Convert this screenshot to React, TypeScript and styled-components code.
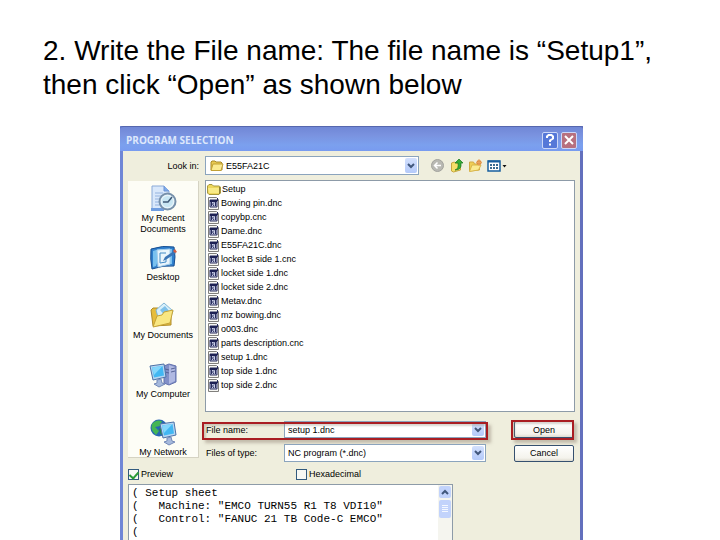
import React from "react";
import styled, { createGlobalStyle } from "styled-components";

const GlobalStyle = createGlobalStyle`
  * { box-sizing: border-box; }
  body { margin: 0; background: #fff; }
  button, input, select, textarea { font: inherit; color: inherit; margin: 0; padding: 0; border: 0; background: none; outline: none; }
  svg { display: block; flex: none; }
`;

const Slide = styled.main`
  display: flex;
  flex-direction: column;
  height: 100vh;
  overflow: hidden;
  font-family: "Liberation Sans", Arial, sans-serif;
`;

const Heading = styled.h1`
  margin: 34px 43px 24px;
  font-size: 28px;
  line-height: 34px;
  font-weight: 400;
  color: #000;
`;

const Dialog = styled.section`
  display: flex;
  flex-direction: column;
  flex: 1;
  min-height: 0;
  margin: 0 137px 0 120px;
  background: #efeedd;
  border: solid #6f86d6;
  border-width: 0 3px;
  border-right-color: #6370bd;
  font-size: 9px;
  line-height: 14px;
  color: #000;
`;

const TitleBar = styled.header`
  display: flex;
  align-items: center;
  gap: 3px;
  height: 25px;
  margin: 0 -3px;
  padding: 2px 6px 0 6px;
  border-top: 1px solid #5667ae;
  border-radius: 3px 3px 0 0;
  background: linear-gradient(#7087d6, #7a93e0 35%, #7ba0ee 75%, #789bf0);
`;

const Title = styled.h2`
  flex: 1;
  margin: 0;
  font-family: "Open Sans", "Noto Sans", sans-serif;
  font-size: 10px;
  font-weight: 700;
  color: #dde7fc;
`;

const CaptionButton = styled.button<{ $close?: boolean }>`
  display: grid;
  place-items: center;
  width: 16px;
  height: 17px;
  border: 1px solid #cbd7f8;
  border-radius: 2px;
  background: ${(p) => (p.$close ? "#b7707f" : "#5578d8")};
`;

const Body = styled.div`
  display: flex;
  flex-direction: column;
  flex: 1;
  min-height: 0;
  padding: 5px 5px 0;
`;

const LookInRow = styled.div`
  display: grid;
  grid-template-columns: 71px minmax(0, 214px) auto;
  column-gap: 6px;
  align-items: center;
  height: 19px;
  margin-bottom: 5px;
  > label { text-align: right; }
`;

const Combo = styled.div<{ $indent?: boolean }>`
  display: flex;
  align-items: center;
  gap: 2px;
  height: 100%;
  min-width: 0;
  padding: 1px 1px 1px ${(p) => (p.$indent ? "4px" : "3px")};
  border: 1px solid #8ba4bd;
  background: #fff;
  select, input { appearance: none; flex: 1; min-width: 0; height: 100%; }
`;

const Arrow = styled.button`
  display: grid;
  place-items: center;
  width: 12px;
  height: 100%;
  border-radius: 2px;
  background: linear-gradient(#d3e0fd, #b4cafa);
`;

const Tools = styled.div`
  display: flex;
  align-items: center;
  gap: 4px;
  margin-left: 5px;
`;

const ToolButton = styled.button`
  display: grid;
  place-items: center;
  min-width: 15px;
  height: 16px;
`;

const Columns = styled.div`
  display: grid;
  grid-template-columns: 71px minmax(0, 1fr);
  column-gap: 6px;
`;

const Places = styled.nav`
  display: grid;
  grid-template-rows: repeat(4, 1fr) 38px;
  height: 277px;
  margin-top: 1px;
  padding-top: 4px;
  border: solid #d5d3c3;
  border-width: 0 1px 1px 0;
  background: #fdfdf6;
`;

const Place = styled.button`
  display: flex;
  flex-direction: column;
  align-items: center;
  line-height: 11px;
  white-space: nowrap;
  svg { margin-bottom: 1px; }
`;

const Main = styled.div`
  display: flex;
  flex-direction: column;
`;

const FileList = styled.ul`
  min-height: 232px;
  margin: 0 0 9px;
  padding: 1px 0 0 1px;
  list-style: none;
  border: 1px solid #8d9ba8;
  background: #fff;
`;

const FileItem = styled.li`
  height: 14px;
  button { display: flex; align-items: center; gap: 1px; height: 14px; white-space: nowrap; }
`;

const FieldRow = styled.div`
  position: relative;
  display: grid;
  grid-template-columns: 78px minmax(0, 202px) minmax(60px, 1fr);
  align-items: center;
  height: 17px;
  margin-bottom: 6px;
  padding: 0 1px;
`;

const PushButton = styled.button`
  justify-self: end;
  width: 60px;
  height: 17px;
  border: 1px solid #35506f;
  border-radius: 2px;
  background: linear-gradient(#fff, #f4f3ec 80%, #dedbd0);
`;

const Marker = styled.span<{ $button?: boolean }>`
  position: absolute;
  top: ${(p) => (p.$button ? "-1px" : "1px")};
  bottom: -2px;
  left: ${(p) => (p.$button ? "auto" : "-3px")};
  right: ${(p) => (p.$button ? "1px" : "87px")};
  width: ${(p) => (p.$button ? "63px" : "auto")};
  border: 2px solid #a91d22;
  box-shadow: 3px 3px 3px #9a8f8088, inset 2px 2px 2px #88807055;
  pointer-events: none;
`;

const Options = styled.div`
  display: grid;
  grid-template-columns: 168px auto;
  justify-content: start;
  align-items: center;
  height: 12px;
  margin: 0 0 5px;
`;

const Check = styled.label`
  display: flex;
  align-items: center;
  gap: 2px;
`;

const Tick = styled.input`
  appearance: none;
  width: 11px;
  height: 11px;
  && { border: 1px solid #325a7e; background: #f7f8f4; }
  &:checked::after {
    content: "";
    display: block;
    width: 4px;
    height: 7px;
    margin: 0 2px;
    border: solid #2a9a35;
    border-width: 0 2px 2px 0;
    rotate: 42deg;
  }
`;

const Preview = styled.div`
  display: flex;
  flex: 1;
  min-height: 0;
  width: 100%;
  max-width: 325px;
  border: 1px solid #8d9ba8;
  border-bottom: 0;
  background: #fff;
  textarea {
    flex: 1;
    min-width: 0;
    padding: 2px 0 0 3px;
    resize: none;
    overflow: hidden;
    white-space: pre;
    font-family: "Liberation Mono", monospace;
    font-size: 11px;
    line-height: 13px;
  }
`;

const ScrollBar = styled.div`
  display: flex;
  flex-direction: column;
  gap: 2px;
  width: 14px;
  padding: 1px;
  background: #f5f5ef;
`;

const ScrollUp = styled.button`
  display: grid;
  place-items: center;
  height: 12px;
  border-radius: 2px;
  background: #c2d3fb;
`;

const Thumb = styled(ScrollUp)`
  height: 18px;
`;

const Chevron = ({ up }: { up?: boolean }) => (
  <svg width="8" height="6" viewBox="0 0 8 6" fill="none" stroke="#41577c" strokeWidth="2">
    <path d={up ? "M1 5l3-3 3 3" : "M1 1l3 3 3-3"} />
  </svg>
);

const Folder = () => (
  <svg width="14" height="13" viewBox="0 0 14 13">
    <path d="M1 11V3l1-1h3l1 1h5l1 1v7z" fill="#e9c952" stroke="#a88928" />
    <path d="M1 11.500L3 5h10l-2 6.500z" fill="#fbea91" stroke="#c1a035" />
  </svg>
);

const ListFolder = () => (
  <svg width="14" height="13" viewBox="0 0 14 13">
    <path d="M.5 10V3L2 1.500h3L6.500 3H12l1.500 1v6L12 11.500H2z" fill="#edd65b" stroke="#a6973f" />
    <path d="M1 5h11v5H2z" fill="#f8ea86" />
    <path d="M12.500 4v7" stroke="#8e8135" />
  </svg>
);

const DncFile = () => (
  <svg width="13" height="13" viewBox="0 0 13 13">
    <path d="M1.500 .5h8l2 2v10h-10z" fill="#f6f6f2" stroke="#807f7c" />
    <path d="M3 3h7v7H3z" fill="#c9cee8" stroke="#262b5c" />
    <path d="M3 3h7v2H3z" fill="#1d2154" />
    <path d="M4.500 5v4M7 5.500L5.500 7 7 9M8.500 5v4M10.500 1v3" stroke="#262b5c" fill="none" />
  </svg>
);

const Recent = () => (
  <svg width="28" height="27" viewBox="0 0 28 27">
    <path d="M3 1h12l5 5v18H3z" fill="#d9e8fb" stroke="#8aa9d8" />
    <path d="M15 1v5h5" fill="#7fabeb" stroke="#6c94d3" />
    <path d="M6 8h8M6 11h7M6 14h5M6 17h4M6 20h4" stroke="#93b2de" />
    <path d="M2 23h13v3H2z" fill="#6f9de0" />
    <circle cx="18.500" cy="16.500" r="8" fill="#e6f4fa" stroke="#7690aa" strokeWidth="2" />
    <circle cx="18.500" cy="16.500" r="5.500" fill="#c8e6f3" />
    <path d="M23 12l-4 5h-5" fill="none" stroke="#3f5977" strokeWidth="1.500" />
  </svg>
);

const Desktop = () => (
  <svg width="28" height="27" viewBox="0 0 28 27">
    <path d="M2 5q12-4 23-2 2 10 0 19-11-1-22 3Q1 15 2 5z" fill="#2f7fcd" stroke="#174f91" />
    <path d="M4 7q5-2 9-2L7 22l-3 1zM19 5h4v15l-6 1z" fill="#79c1ef" />
    <path d="M8 6l13-1v15l-12 3z" fill="#e9f5fc" stroke="#a2cdea" />
    <path d="M17 9h-6v10l6-1v-4" fill="none" stroke="#428bc6" />
    <path d="M14 17l2-4 9-6 2 2-9 6z" fill="#3a74b5" />
    <path d="M24 7l2-2 2 3-2 1z" fill="#d65d3f" />
  </svg>
);

const Documents = () => (
  <svg width="28" height="27" viewBox="0 0 28 27">
    <path d="M4 24L2 8l2-2h5l2 3h11v14z" fill="#e6bd3c" stroke="#b08c2a" />
    <path d="M7 8l8-7 9 8-4 11-10-1z" fill="#d8f0fa" stroke="#80b5d6" />
    <path d="M11 8l5-4 5 6-4 5z" fill="#7dc0e9" />
    <path d="M4 25l4-11 5-1 2-3 9-2-3 13z" fill="#f9e782" stroke="#c5a236" />
  </svg>
);

const Screen = ({ x, y }: { x: number; y: number }) => (
  <g transform={`translate(${x} ${y})`}>
    <path d="M1 2l14-2 2 13-13 3z" fill="#b6d6f2" stroke="#4d72a7" />
    <path d="M3 3.500l10.500-1.500 1.500 9.500-10 2z" fill="#42b7f2" />
    <path d="M3 3.500l10.500-1.500L5 11z" fill="#84d6fb" />
    <path d="M8 16l4-1 1 4 3 1-6 3-5-3 3-1z" fill="#a6b9dc" stroke="#7389b8" />
  </g>
);

const Computer = () => (
  <svg width="28" height="27" viewBox="0 0 28 27">
    <path d="M15 5l5-2 7 2v16l-7 3-5-2z" fill="#8290c8" stroke="#6372ad" />
    <path d="M20 4v19l6-3V6z" fill="#b0b9e2" />
    <path d="M16 8l4 1M16 11l4 1M22 8l4-1M22 11l4-1" stroke="#566396" />
    <Screen x={0} y={3} />
  </svg>
);

const Network = () => (
  <svg width="28" height="27" viewBox="0 0 28 27">
    <circle cx="10" cy="9" r="8.500" fill="#2766b4" />
    <path d="M3 5q4-5 10-3l-2 5-5 1 4 4-3 4Q1 11 3 5z" fill="#43b655" />
    <path d="M10 10l5-3 1 6-4 3z" fill="#278947" />
    <Screen x={10} y={3} />
  </svg>
);

const places = [
  { label: ["My Recent", "Documents"], Icon: Recent },
  { label: ["Desktop"], Icon: Desktop },
  { label: ["My Documents"], Icon: Documents },
  { label: ["My Computer"], Icon: Computer },
  { label: ["My Network"], Icon: Network },
];

const files = [
  "Bowing pin.dnc", "copybp.cnc", "Dame.dnc", "E55FA21C.dnc", "locket B side 1.cnc",
  "locket side 1.dnc", "locket side 2.dnc", "Metav.dnc", "mz bowing.dnc", "o003.dnc",
  "parts description.cnc", "setup 1.dnc", "top side 1.dnc", "top side 2.dnc",
];

const sheet = `( Setup sheet
(   Machine: "EMCO TURN55 R1 T8 VDI10"
(   Control: "FANUC 21 TB Code-C EMCO"
(`;

export default function App() {
  return (
    <Slide>
      <GlobalStyle />
      <Heading>2. Write the File name: The file name is “Setup1”, then click “Open” as shown below</Heading>
      <Dialog aria-labelledby="dialog-title">
        <TitleBar>
          <Title id="dialog-title">PROGRAM SELECTION</Title>
          <CaptionButton aria-label="Help">
            <svg width="10" height="12" viewBox="0 0 10 12" fill="none" stroke="#fff" strokeWidth="2">
              <path d="M2 4V2.500L3.500 1h3L8 2.500v2L5 6.500V8M5 9.500v2" />
            </svg>
          </CaptionButton>
          <CaptionButton $close aria-label="Close">
            <svg width="10" height="10" viewBox="0 0 10 10" stroke="#fff" strokeWidth="2"><path d="M1 1l8 8M9 1L1 9" /></svg>
          </CaptionButton>
        </TitleBar>
        <Body>
          <LookInRow>
            <label htmlFor="look-in">Look in:</label>
            <Combo $indent>
              <Folder />
              <select id="look-in"><option>E55FA21C</option></select>
              <Arrow tabIndex={-1} aria-label="Show folders"><Chevron /></Arrow>
            </Combo>
            <Tools>
              <ToolButton aria-label="Back">
                <svg width="13" height="13" viewBox="0 0 13 13">
                  <circle cx="6.500" cy="6.500" r="6" fill="#b9b9b3" stroke="#a2a29d" />
                  <path d="M10 6.500H3.500M6.500 3.500l-3 3 3 3" fill="none" stroke="#fff" strokeWidth="1.500" />
                </svg>
              </ToolButton>
              <ToolButton aria-label="Up one level">
                <svg width="14" height="15" viewBox="0 0 14 15">
                  <path d="M1.500 13V5l3-1 1 1h5v7l-7 2z" fill="#f5df69" stroke="#c7a63e" />
                  <path d="M5 12q4-1 3-7H5l4-4 4 4h-2q1 7-6 7z" fill="#35ac35" stroke="#16751d" strokeWidth=".7" />
                </svg>
              </ToolButton>
              <ToolButton aria-label="New folder">
                <svg width="15" height="14" viewBox="0 0 15 14">
                  <path d="M1.500 12V3h4l1 2h5v6z" fill="#f0ce56" stroke="#d1a943" />
                  <path d="M1.500 12.500L4 6h9l-2.500 5z" fill="#fbea91" stroke="#d9b64b" />
                  <circle cx="11" cy="3.500" r="2.500" fill="#df8c42" />
                  <path d="M11 0v7M8 3.500h6" stroke="#e8a35e" />
                </svg>
              </ToolButton>
              <ToolButton aria-label="Views">
                <svg width="20" height="12" viewBox="0 0 20 12">
                  <path d="M1 1h12v10H1z" fill="#fff" stroke="#185f9f" strokeWidth="1.500" />
                  <path d="M1 1.500h12" stroke="#185f9f" strokeWidth="2" />
                  <path d="M3 4h2v2H3zM6 4h2v2H6zM9 4h2v2H9zM3 7h2v2H3zM6 7h2v2H6zM9 7h2v2H9z" fill="#3a6a90" />
                  <path d="M15.500 5h4l-2 2.500z" fill="#111" />
                </svg>
              </ToolButton>
            </Tools>
          </LookInRow>
          <Columns>
            <Places aria-label="Places">
              {places.map(({ label, Icon }) => (
                <Place key={label[0]}>
                  <Icon />
                  {label.map((line) => <span key={line}>{line}</span>)}
                </Place>
              ))}
            </Places>
            <Main>
              <FileList>
                <FileItem><button><ListFolder />Setup</button></FileItem>
                {files.map((name) => (
                  <FileItem key={name}><button><DncFile /><span>{name}</span></button></FileItem>
                ))}
              </FileList>
              <FieldRow>
                <label htmlFor="file-name">File name:</label>
                <Combo>
                  <input id="file-name" defaultValue="setup 1.dnc" />
                  <Arrow aria-label="Recent names"><Chevron /></Arrow>
                </Combo>
                <PushButton>Open</PushButton>
                <Marker />
                <Marker $button />
              </FieldRow>
              <FieldRow>
                <label htmlFor="file-type">Files of type:</label>
                <Combo>
                  <select id="file-type"><option>NC program (*.dnc)</option></select>
                  <Arrow tabIndex={-1} aria-label="Show types"><Chevron /></Arrow>
                </Combo>
                <PushButton>Cancel</PushButton>
              </FieldRow>
            </Main>
          </Columns>
          <Options>
            <Check><Tick type="checkbox" defaultChecked />Preview</Check>
            <Check><Tick type="checkbox" />Hexadecimal</Check>
          </Options>
          <Preview>
            <textarea aria-label="Preview text" readOnly value={sheet} />
            <ScrollBar>
              <ScrollUp aria-label="Scroll up"><Chevron up /></ScrollUp>
              <Thumb aria-label="Scroll position">
                <svg width="6" height="8" viewBox="0 0 6 8" stroke="#f4f8ff"><path d="M0 .5h6M0 2.500h6M0 4.500h6M0 6.500h6" /></svg>
              </Thumb>
            </ScrollBar>
          </Preview>
        </Body>
      </Dialog>
    </Slide>
  );
}
